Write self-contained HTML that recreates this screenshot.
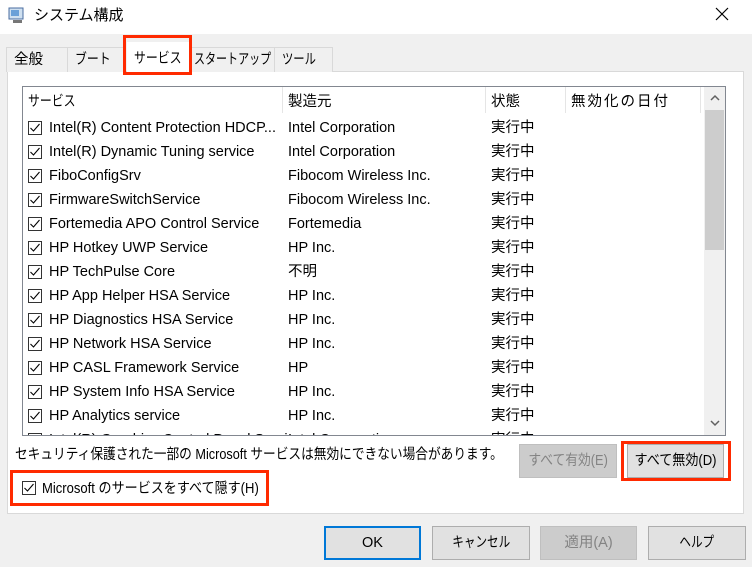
<!DOCTYPE html>
<html><head><meta charset="utf-8"><style>
*{box-sizing:border-box;margin:0;padding:0}
body{width:752px;height:567px;background:#f0f0f0;font-family:"Liberation Sans","Noto Sans CJK JP",sans-serif;font-size:14.5px;line-height:18px;color:#000;position:relative;overflow:hidden}
.a{position:absolute;white-space:nowrap;line-height:18px}
.s{display:inline-block;transform-origin:left center}
.c{display:inline-block;transform-origin:center center}
.title{left:0;top:0;width:752px;height:34px;background:#fff}
.tab{top:47px;height:25px;border:1px solid #d9d9d9;border-bottom:none;background:#f0f0f0;padding-top:3px;padding-left:7px}
.panel{left:7px;top:71px;width:737px;height:443px;background:#fff;border:1px solid #d9d9d9}
.list{left:22px;top:86px;width:704px;height:350px;border:1px solid #828790;background:#fff;overflow:hidden}
.cb{width:14px;height:14px;border:1px solid #333;background:#fff}
.cb svg{position:absolute;left:0px;top:0px}
.btn{height:34px;background:#e1e1e1;border:1px solid #adadad;text-align:center;padding-top:7px}
.red{border:3px solid #ff2a00}
.sep{top:0;width:1px;height:26px;background:#e5e5e5}
</style></head><body>
<div class="a title"></div>
<svg class="a" style="left:8px;top:7px" width="18" height="18"><rect x="1" y="1" width="14" height="11" fill="#cfe0f0" stroke="#4a6da0"/><rect x="3" y="3" width="8" height="6" fill="#6aa0d8"/><rect x="5" y="13" width="9" height="3" fill="#777"/></svg>
<div class="a" style="left:34px;top:7px;font-size:15px">システム構成</div>
<svg class="a" style="left:715px;top:7px" width="14" height="14"><path d="M1 1L13 13M13 1L1 13" stroke="#000" stroke-width="1.2"/></svg>
<div class="a panel"></div>
<div class="a tab" style="left:6px;width:62px">全般</div>
<div class="a tab" style="left:67px;width:59px"><span class="s" style="transform:scaleX(.82)">ブート</span></div>
<div class="a tab" style="left:190px;width:85px;padding-left:3px"><span class="s" style="transform:scaleX(.76)">スタートアップ</span></div>
<div class="a tab" style="left:274px;width:59px"><span class="s" style="transform:scaleX(.78)">ツール</span></div>
<div class="a" style="left:127px;top:42px;width:64px;height:32px;background:#fff"></div>
<div class="a red" style="left:123px;top:35px;width:69px;height:40px"></div>
<div class="a" style="left:134px;top:50px"><span class="s" style="transform:scaleX(.82)">サービス</span></div>
<div class="a list">
<div class="a" style="left:5px;top:6px"><span class="s" style="transform:scaleX(.82)">サービス</span></div>
<div class="a" style="left:265px;top:6px">製造元</div>
<div class="a" style="left:468px;top:6px">状態</div>
<div class="a" style="left:548px;top:6px;letter-spacing:2px">無効化の日付</div>
<div class="a sep" style="left:259px"></div><div class="a sep" style="left:462px"></div><div class="a sep" style="left:542px"></div><div class="a sep" style="left:677px"></div>
<div id="rows"></div>
<div class="a" style="left:681px;top:0;width:21px;height:348px;background:#f0f0f0"></div>
<div class="a" style="left:682px;top:23px;width:19px;height:140px;background:#cdcdcd"></div>
<svg class="a" style="left:686px;top:6px" width="12" height="10"><path d="M2 7L6 3L10 7" stroke="#606060" stroke-width="1.5" fill="none"/></svg>
<svg class="a" style="left:686px;top:331px" width="12" height="10"><path d="M2 3L6 7L10 3" stroke="#606060" stroke-width="1.5" fill="none"/></svg>
</div>
<div class="a" style="left:15px;top:446px"><span class="s" style="transform:scaleX(.875)">セキュリティ保護された一部の Microsoft サービスは無効にできない場合があります。</span></div>
<div class="a btn" style="left:519px;top:444px;width:98px;color:#838383;background:#cccccc;border-color:#bfbfbf"><span class="c" style="transform:scaleX(.88)">すべて有効(E)</span></div>
<div class="a btn" style="left:627px;top:444px;width:97px"><span class="c" style="transform:scaleX(.9)">すべて無効(D)</span></div>
<div class="a red" style="left:621px;top:441px;width:110px;height:40px"></div>
<div class="a red" style="left:10px;top:470px;width:259px;height:36px"></div>
<div class="a cb" style="left:22px;top:481px"><svg width="12" height="12"><path d="M1.5 6L4.5 9L10.5 2" stroke="#000" stroke-width="1.1" fill="none"/></svg></div>
<div class="a" style="left:42px;top:480px"><span class="s" style="transform:scaleX(.9)">Microsoft のサービスをすべて隠す(H)</span></div>
<div class="a btn" style="left:324px;top:526px;width:97px;border:2px solid #0078d7;padding-top:6px">OK</div>
<div class="a btn" style="left:432px;top:526px;width:98px"><span class="c" style="transform:scaleX(.8)">キャンセル</span></div>
<div class="a btn" style="left:540px;top:526px;width:97px;color:#838383;background:#cccccc;border-color:#bfbfbf">適用(A)</div>
<div class="a btn" style="left:648px;top:526px;width:98px"><span class="c" style="transform:scaleX(.8)">ヘルプ</span></div>
<script>
var d=[["Intel(R) Content Protection HDCP...","Intel Corporation"],["Intel(R) Dynamic Tuning service","Intel Corporation"],["FiboConfigSrv","Fibocom Wireless Inc."],["FirmwareSwitchService","Fibocom Wireless Inc."],["Fortemedia APO Control Service","Fortemedia"],["HP Hotkey UWP Service","HP Inc."],["HP TechPulse Core","不明"],["HP App Helper HSA Service","HP Inc."],["HP Diagnostics HSA Service","HP Inc."],["HP Network HSA Service","HP Inc."],["HP CASL Framework Service","HP"],["HP System Info HSA Service","HP Inc."],["HP Analytics service","HP Inc."],["Intel(R) Graphics Control Panel Service","Intel Corporation"]];
var h="";d.forEach(function(r,i){var y=32+i*24;h+='<div class="a cb" style="left:5px;top:'+(y+2)+'px"><svg width="12" height="12"><path d="M1.5 6L4.5 9L10.5 2" stroke="#000" stroke-width="1.1" fill="none"/></svg></div><div class="a" style="left:26px;top:'+y+'px">'+r[0]+'</div><div class="a" style="left:265px;top:'+y+'px">'+r[1]+'</div><div class="a" style="left:468px;top:'+y+'px">実行中</div>';});
document.getElementById("rows").innerHTML=h;
</script>
</body></html>
